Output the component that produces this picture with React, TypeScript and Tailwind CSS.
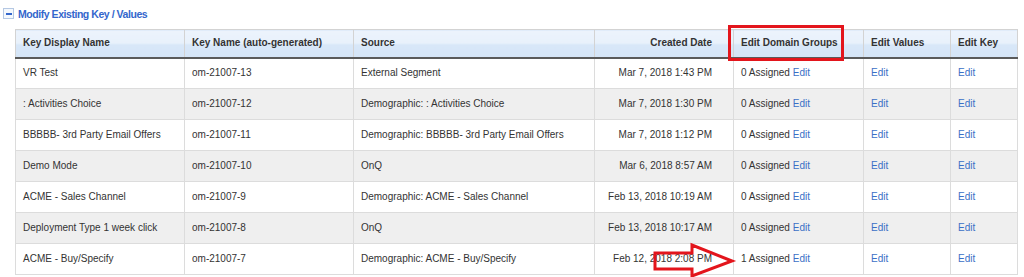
import React from 'react';

type Row = {
  display: string;
  keyName: string;
  source: string;
  created: string;
  assigned: number;
};

const rows: Row[] = [
  { display: 'VR Test', keyName: 'om-21007-13', source: 'External Segment', created: 'Mar 7, 2018 1:43 PM', assigned: 0 },
  { display: ': Activities Choice', keyName: 'om-21007-12', source: 'Demographic: : Activities Choice', created: 'Mar 7, 2018 1:30 PM', assigned: 0 },
  { display: 'BBBBB- 3rd Party Email Offers', keyName: 'om-21007-11', source: 'Demographic: BBBBB- 3rd Party Email Offers', created: 'Mar 7, 2018 1:12 PM', assigned: 0 },
  { display: 'Demo Mode', keyName: 'om-21007-10', source: 'OnQ', created: 'Mar 6, 2018 8:57 AM', assigned: 0 },
  { display: 'ACME - Sales Channel', keyName: 'om-21007-9', source: 'Demographic: ACME - Sales Channel', created: 'Feb 13, 2018 10:19 AM', assigned: 0 },
  { display: 'Deployment Type 1 week click', keyName: 'om-21007-8', source: 'OnQ', created: 'Feb 13, 2018 10:17 AM', assigned: 0 },
  { display: 'ACME - Buy/Specify', keyName: 'om-21007-7', source: 'Demographic: ACME - Buy/Specify', created: 'Feb 12, 2018 2:08 PM', assigned: 1 },
];

const thBase =
  'h-[28px] px-[7px] text-left font-bold text-[#333] border-x border-t border-[#d3d3d3] border-b-2 border-b-[#5a5a5a] bg-[linear-gradient(#ecf3fc_0%,#e8f1fb_48%,#d8e7f8_52%,#d5e5f7_100%)]';
const tdBase = 'h-[31px] px-[7px] border border-[#dcdcdc] whitespace-nowrap';
const link = 'text-[#3a6fc6]';

export default function App() {
  return (
    <div className="relative w-[1024px] h-[277px] overflow-hidden bg-white font-['Liberation_Sans',Arial,sans-serif] text-[10px] leading-[12px]">
      {/* Section title */}
      <div className="flex items-center h-[29px] pl-[3px] pb-[2px] gap-[4px]">
        <span className="flex items-center justify-center w-[11px] h-[11px] border border-[#b5c8e3] bg-[#f4f8fd]">
          <span className="block w-[6px] h-[2px] bg-[#3366cc]" />
        </span>
        <span className="font-bold text-[10.5px] text-[#3366cc] tracking-[-0.45px]">Modify Existing Key / Values</span>
      </div>

      {/* Key table */}
      <table className="ml-[15px] w-[1002px] table-fixed border-collapse">
        <colgroup>
          <col className="w-[169px]" />
          <col className="w-[169px]" />
          <col className="w-[241px]" />
          <col className="w-[139px]" />
          <col className="w-[130px]" />
          <col className="w-[87px]" />
          <col className="w-[67px]" />
        </colgroup>
        <thead>
          <tr>
            <th className={thBase}>Key Display Name</th>
            <th className={thBase}>Key Name (auto-generated)</th>
            <th className={thBase}>Source</th>
            <th className={`${thBase} text-right pr-[21px]`}>Created Date</th>
            <th className={thBase}>Edit Domain Groups</th>
            <th className={thBase}>Edit Values</th>
            <th className={thBase}>Edit Key</th>
          </tr>
        </thead>
        <tbody className="text-[#333]">
          {rows.map((row, i) => (
            <tr key={row.keyName} className={i % 2 === 1 ? 'bg-[#efefef]' : 'bg-white'}>
              <td className={tdBase}>{row.display}</td>
              <td className={tdBase}>{row.keyName}</td>
              <td className={tdBase}>{row.source}</td>
              <td className={`${tdBase} text-right pr-[21px]`}>{row.created}</td>
              <td className={tdBase}>
                {row.assigned} Assigned <span className={link}>Edit</span>
              </td>
              <td className={tdBase}>
                <span className={link}>Edit</span>
              </td>
              <td className={tdBase}>
                <span className={link}>Edit</span>
              </td>
            </tr>
          ))}
        </tbody>
      </table>

      {/* Annotation: highlight box */}
      <div className="absolute left-[728px] top-[25px] w-[116px] h-[36px] border-[3px] border-[#e3151c] pointer-events-none" />

      {/* Annotation: arrow */}
      <svg className="absolute inset-0 pointer-events-none" width="1024" height="277" viewBox="0 0 1024 277">
        <polygon
          points="655,253 692,253 692,245 732,261 692,276 692,269 655,269"
          fill="none"
          stroke="#e3151c"
          strokeWidth="3"
          strokeLinejoin="miter"
        />
      </svg>
    </div>
  );
}
